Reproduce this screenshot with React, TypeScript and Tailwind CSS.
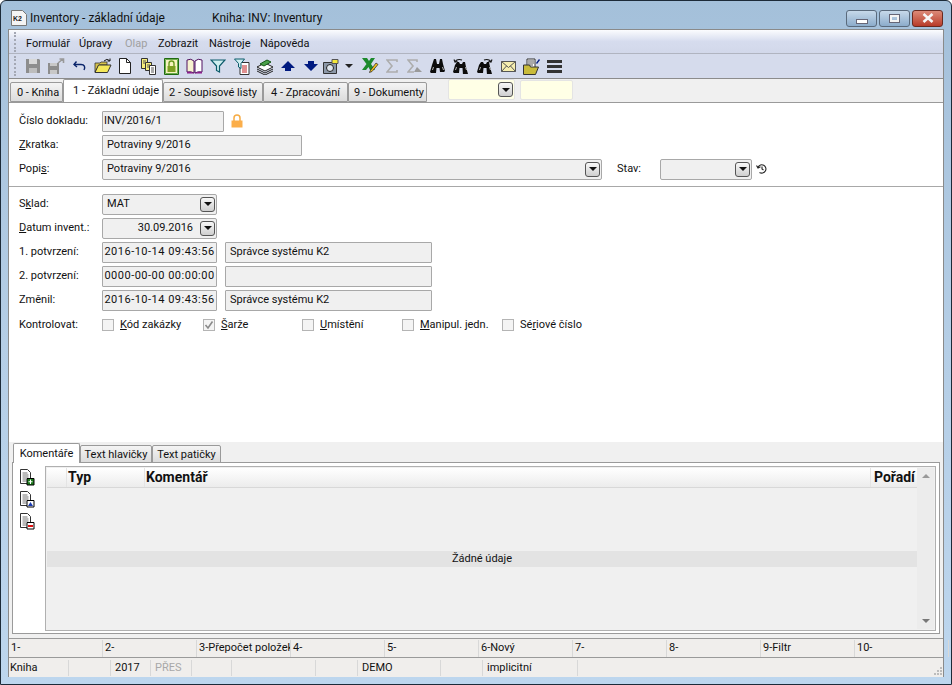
import type { ReactNode } from 'react'

function Field({ w, children, pad = 'px-[4px]' }: { w: string; children?: ReactNode; pad?: string }) {
  return (
    <div className={`${w} h-[21px] shrink-0 rounded-[1px] border border-[#a8a8a8] bg-[#f0f0f0] flex items-center pt-[1px] text-[11px] text-[#111] whitespace-nowrap overflow-hidden ${pad}`}>
      {children}
    </div>
  )
}

function DropBtn() {
  return (
    <span className="w-[15px] h-[15px] rounded-[3px] border border-[#555] bg-gradient-to-b from-[#f8f8f8] to-[#cfcfcf] flex items-center justify-center shrink-0">
      <span className="w-0 h-0 border-x-[4px] border-x-transparent border-t-[4px] border-t-[#111]" />
    </span>
  )
}

function Combo({ w, text, bg = 'bg-[#f0f0f0]', border = 'border-[#a8a8a8]', right }: { w: string; text?: string; bg?: string; border?: string; right?: boolean }) {
  return (
    <div className={`${w} h-[21px] shrink-0 rounded-[2px] border ${border} ${bg} flex items-center text-[11px] text-[#111] pr-[1px]`}>
      <span className={`flex-1 px-[4px] pt-[1px] truncate ${right ? 'text-right pr-[7px]' : ''}`}>{text}</span>
      <DropBtn />
    </div>
  )
}

function Row({ label, children, h = 'h-[24px]' }: { label: ReactNode; children: ReactNode; h?: string }) {
  return (
    <div className={`flex items-center ${h}`}>
      <span className="w-[83px] ml-[1px] pt-[1px] shrink-0 text-[11px] text-[#111]">{label}</span>
      {children}
    </div>
  )
}

function Check({ label, w, checked }: { label: ReactNode; w: string; checked?: boolean }) {
  return (
    <div className={`${w} flex items-center gap-[6px] shrink-0`}>
      <span className="w-[12px] h-[12px] border border-[#b4b4b4] bg-[#f4f4f4] flex items-center justify-center">
        {checked && (
          <svg width="10" height="10" viewBox="0 0 10 10">
            <path d="M1.5 5 L4 8 L8.5 1.5" fill="none" stroke="#8a8a8a" strokeWidth="1.6" />
          </svg>
        )}
      </span>
      <span className="text-[11px] text-[#111]">{label}</span>
    </div>
  )
}

function Tab({ w, children, active, h }: { w: string; children: ReactNode; active?: boolean; h?: string }) {
  return (
    <div
      className={`${w} shrink-0 flex items-center justify-center text-[11px] text-[#111] border border-[#9a9a9a] whitespace-nowrap rounded-t-[2px]
        ${active ? `bg-white border-b-0 pt-[1px] ${h ?? 'h-[23px]'} relative z-10` : `bg-gradient-to-b from-[#f4f4f4] to-[#dcdcdc] pt-[2px] ${h ?? 'h-[20px]'}`}`}
    >
      {children}
    </div>
  )
}

function Doc({ children }: { children?: ReactNode }) {
  return (
    <svg width="16" height="17" viewBox="0 0 16 17">
      <path d="M1.5 .5h7l3 3v11h-10z" fill="#fff" stroke="#333" />
      <path d="M3.500 4h5M3.500 6h6M3.500 8h6M3.500 10h4M3.500 12h4" stroke="#777" />
      {children}
    </svg>
  )
}

function Binoc({ arrow }: { arrow?: 'left' | 'right' }) {
  const top = arrow ? 4 : 1
  return (
    <svg width="16" height="16" viewBox="0 0 16 16">
      <path d={`M4 ${top}h2l1 ${6 - top}h2l1-${6 - top}h2l1 5 2 7-1 1H10L9.500 10h-3L6 15H1l-1-1 2-7z`} fill="#0c0c0c" />
      <path d="M3.500 9l-1 3M12.500 9l1 3" stroke="#b8b8b8" />
      {arrow === 'left' && <path d="M2 3.500Q4.500 .5 9 2M1 1.500l1 2.500 2.500-.5" fill="none" stroke="#111" strokeWidth="1.100" />}
      {arrow === 'right' && <path d="M7 2Q11.500 .5 14 3.500M15 1.500l-1 2.500-2.500-.5" fill="none" stroke="#111" strokeWidth="1.100" />}
    </svg>
  )
}

function Grip() {
  return <span className="w-[2px] h-[20px] shrink-0 border-l-2 border-dotted border-[#a4a8b4]" />
}

const toolbar: { w: string; icon: ReactNode }[] = [
  { w: 'w-[22px]', icon: (
    <svg width="16" height="16" viewBox="0 0 16 16">
      <path d="M1 1h13l1 1v13H1z" fill="#8d8d8d" />
      <path d="M4 1h8v5H4z" fill="#d8d8d8" />
      <path d="M4 10h8v5H4z" fill="#bdbdbd" />
    </svg>
  ) },
  { w: 'w-[24px]', icon: (
    <svg width="18" height="16" viewBox="0 0 18 16">
      <path d="M1 5h11v11H1z" fill="#8d8d8d" />
      <path d="M3 5h7v3H3zM3 12h7v4H3z" fill="#c8c8c8" />
      <path d="M11 5l5-4M12.5 1H16.5V5" fill="none" stroke="#999" strokeWidth="1.6" />
    </svg>
  ) },
  { w: 'w-[23px]', icon: (
    <svg width="13" height="10" viewBox="0 0 13 10">
      <path d="M3.500 .5L1 3.500 4 6" fill="none" stroke="#0a246a" strokeWidth="1.400" />
      <path d="M1.500 3.500H8C11.500 3.500 12.500 6 11 9" fill="none" stroke="#0a246a" strokeWidth="1.400" />
    </svg>
  ) },
  { w: 'w-[23px]', icon: (
    <svg width="18" height="16" viewBox="0 0 18 16">
      <path d="M1 5h5l1-1h6v3H5L1 14z" fill="#d6c24a" stroke="#333" strokeWidth=".8" />
      <path d="M1 14.500L4.500 7H17l-3.500 7.500z" fill="#f4e85a" stroke="#333" />
      <path d="M10 3Q13 0 15.500 2.500M16 0.500V3H13.500" fill="none" stroke="#111" />
    </svg>
  ) },
  { w: 'w-[22px]', icon: (
    <svg width="14" height="16" viewBox="0 0 14 16">
      <path d="M1.500.5h7l4 4v11h-11z" fill="#fff" stroke="#222" />
      <path d="M8.500.5v4h4" fill="none" stroke="#222" />
    </svg>
  ) },
  { w: 'w-[24px]', icon: (
    <svg width="17" height="17" viewBox="0 0 17 17">
      <path d="M1.500.5h6v10h-6z" fill="#f7ee7a" stroke="#333" />
      <path d="M5.500 4.500h6v8h-6z" fill="#f7ee7a" stroke="#333" />
      <path d="M9.500 7.500h6v9h-6z" fill="#fff" stroke="#333" />
      <path d="M3 3h3M3 5h2M7 7h3M7 9h2M11 10h3M11 12h3M11 14h3" stroke="#555" />
    </svg>
  ) },
  { w: 'w-[23px]', icon: (
    <svg width="15" height="17" viewBox="0 0 15 17">
      <path d="M.5.500h14v16H.5z" fill="#f7f3c0" stroke="#1f6a10" />
      <path d="M1.500 1.500h12v14h-12z" fill="none" stroke="#4a9a30" strokeWidth=".8" />
      <path d="M5 8V5.500a2.500 2.500 0 0 1 5 0V8" fill="none" stroke="#6a9a20" strokeWidth="1.4" />
      <path d="M3.500 8h8v6h-8z" fill="#7ea022" />
    </svg>
  ) },
  { w: 'w-[23px]', icon: (
    <svg width="17" height="16" viewBox="0 0 17 16">
      <path d="M1 2Q5 0 8 3V15Q5 13 1 14z" fill="#f7f3d0" stroke="#501060" />
      <path d="M16 2Q12 0 9 3V15Q12 13 16 14z" fill="#fff" stroke="#501060" />
      <path d="M1 14Q5 13 8.500 15.500Q12 13 16 14v1.500H1z" fill="#8a1d8a" />
    </svg>
  ) },
  { w: 'w-[24px]', icon: (
    <svg width="16" height="14" viewBox="0 0 16 14">
      <path d="M1 1h14L9.500 7v6L6.500 11.500V7z" fill="#cfeef0" stroke="#0b5a6a" strokeWidth="1.2" />
    </svg>
  ) },
  { w: 'w-[23px]', icon: (
    <svg width="16" height="17" viewBox="0 0 16 17">
      <path d="M6 4.500h9v12H6z" fill="#fff" stroke="#333" />
      <path d="M8 8h5M8 10h5M8 12h5M8 14h5" stroke="#c02020" />
      <path d="M0.500 1h10L7 5.500v5L4.500 9V5.500z" fill="#cfeef0" stroke="#0b5a6a" />
    </svg>
  ) },
  { w: 'w-[23px]', icon: (
    <svg width="18" height="17" viewBox="0 0 18 17">
      <path d="M1 9l8-4 8 4-8 4z" fill="#fff" stroke="#222" />
      <path d="M1 11l8 4 8-4M1 13l8 4 8-4" fill="none" stroke="#222" />
      <path d="M4 6l7-4 4 2-7 4z" fill="#4aa04a" stroke="#155515" />
    </svg>
  ) },
  { w: 'w-[23px]', icon: (
    <svg width="14" height="10" viewBox="0 0 14 10"><path d="M7 0l7 7h-4v3H4V7H0z" fill="#001a80" /></svg>
  ) },
  { w: 'w-[24px]', icon: (
    <svg width="14" height="10" viewBox="0 0 14 10"><path d="M7 10L0 3h4V0h6v3h4z" fill="#001a80" /></svg>
  ) },
  { w: 'w-[16px]', icon: (
    <svg width="16" height="15" viewBox="0 0 16 15">
      <path d="M.5 3.500h13v11H.5z" fill="#8c98a8" stroke="#333" />
      <circle cx="7" cy="9" r="3.500" fill="#dfe6ee" stroke="#222" />
      <path d="M9 .5h6v4H9z" fill="#f5e93a" stroke="#555" />
    </svg>
  ) },
  { w: 'w-[20px]', icon: <span className="w-0 h-0 border-x-[4px] border-x-transparent border-t-[4px] border-t-[#222]" /> },
  { w: 'w-[21px]', icon: (
    <svg width="18" height="18" viewBox="0 0 18 18">
      <path d="M1 1h5l2 3 2-3h4l-4 6 4 6H9L7.500 10 5 13H1l4.500-6z" fill="#1c8a2c" />
      <path d="M9 14L15 6l2 1.500-6 7-2.500 1z" fill="#f0c020" stroke="#222" strokeWidth=".7" />
    </svg>
  ) },
  { w: 'w-[23px]', icon: (
    <svg width="12" height="14" viewBox="0 0 12 14"><path d="M11 3V1H1l5 6-5 6h10v-2" fill="none" stroke="#adadad" strokeWidth="1.6" /></svg>
  ) },
  { w: 'w-[24px]', icon: (
    <svg width="16" height="14" viewBox="0 0 16 14">
      <path d="M10 3V1H1l5 6-5 6h6" fill="none" stroke="#adadad" strokeWidth="1.6" />
      <path d="M7 13l3-5 2 2 3 3z" fill="#9a9a9a" />
    </svg>
  ) },
  { w: 'w-[22px]', icon: <Binoc /> },
  { w: 'w-[24px]', icon: <Binoc arrow="left" /> },
  { w: 'w-[24px]', icon: <Binoc arrow="right" /> },
  { w: 'w-[23px]', icon: (
    <svg width="15" height="11" viewBox="0 0 15 11">
      <path d="M.5.500h14v10H.5z" fill="#f6eeb0" stroke="#555" />
      <path d="M.5.500l7 6 7-6M.5 10.500l5-5.500M14.500 10.500l-5-5.500" fill="none" stroke="#555" />
    </svg>
  ) },
  { w: 'w-[23px]', icon: (
    <svg width="17" height="17" viewBox="0 0 17 17">
      <path d="M4 1h8v9H4z" fill="#fff" stroke="#333" />
      <path d="M5 3h6M5 5h6M5 7h5" stroke="#555" />
      <path d="M.5 7h6l1 2h8l-3 7.500H.5z" fill="#c9bb3a" stroke="#333" />
      <path d="M13 5l3-4 1 1-3 4z" fill="#001a80" />
    </svg>
  ) },
  { w: 'w-[23px]', icon: (
    <svg width="15" height="13" viewBox="0 0 15 13"><path d="M0 0h15v3H0zM0 5h15v3H0zM0 10h15v3H0z" fill="#333" /></svg>
  ) },
]

const fkeys = ['1-', '2-', '3-Přepočet položek', '4-', '5-', '6-Nový', '7-', '8-', '9-Filtr', '10-']

const statusCells: { w: string; text?: string; muted?: boolean }[] = [
  { w: 'w-[60px]', text: 'Kniha' },
  { w: 'w-[42px]' },
  { w: 'w-[40px]', text: '2017' },
  { w: 'w-[41px]', text: 'PŘES', muted: true },
  { w: 'w-[40px]' },
  { w: 'w-[84px]' },
  { w: 'w-[42px]' },
  { w: 'w-[83px]', text: 'DEMO' },
  { w: 'w-[42px]' },
  { w: 'w-[95px]', text: 'implicitní' },
]

export default function App() {
  return (
    <div className="w-[952px] h-[685px] bg-white overflow-hidden [font-family:Roboto,sans-serif]">
      <div className="w-full h-full rounded-t-[6px] border border-[#1c2a38] bg-gradient-to-b from-[#a4c0da] via-[#b5cee6] to-[#bdd6ee] flex flex-col px-[7px] pb-[7px]">
        {/* titulek okna */}
        <div className="h-[28px] shrink-0 flex items-center pt-[5px]">
          <svg width="16" height="16" viewBox="0 0 16 16" className="ml-[3px] mr-[3px]">
            <path d="M.5.5h11l4 4v11H.5z" fill="#f4f4f4" stroke="#777" />
            <text x="2" y="11" fontSize="7" fontWeight="bold" fill="#222" fontFamily="Liberation Sans">K2</text>
          </svg>
          <span className="w-[182px] text-[12px] text-[#111]">Inventory - základní údaje</span>
          <span className="text-[12px] text-[#111]">Kniha: INV: Inventury</span>
          <div className="ml-auto flex items-start gap-[2px] mr-[1px] mt-[1px]">
            <div className="w-[31px] h-[17px] rounded-[3px] border border-[#5a6a7c] bg-gradient-to-b from-[#c7d9ea] to-[#8caccb] flex items-end justify-center pb-[2px]">
              <span className="w-[10px] h-[3px] bg-white border border-[#667] box-content" />
            </div>
            <div className="w-[31px] h-[17px] rounded-[3px] border border-[#5a6a7c] bg-gradient-to-b from-[#c7d9ea] to-[#8caccb] flex items-center justify-center">
              <span className="w-[9px] h-[7px] border-2 border-[#f4f4f4] outline outline-1 outline-[#667]" />
            </div>
            <div className="w-[31px] h-[17px] rounded-[3px] border border-[#6a2a20] bg-gradient-to-b from-[#dc8a78] to-[#b83a28] flex items-center justify-center">
              <svg width="12" height="10" viewBox="0 0 12 10">
                <path d="M1.500 1l9 8M10.500 1l-9 8" stroke="#f6f6f6" strokeWidth="2.600" />
              </svg>
            </div>
          </div>
        </div>

        <div className="flex-1 min-h-0 flex flex-col border-t border-x border-[#8a8a8a] bg-[#f0f0f0]">
          {/* hlavní nabídka */}
          <div className="h-[24px] shrink-0 flex items-center pl-[5px] bg-gradient-to-b from-[#fbfcfe] via-[#d6dcee] to-[#d2d8ea] text-[11px] text-[#111] border-b border-[#b0b4c0]">
            <Grip />
            <div className="flex items-center pt-[5px]">
              <span className="w-[53px] ml-[10px]">Formulář</span>
              <span className="w-[46px]">Úpravy</span>
              <span className="w-[33px] text-[#a0a0a0]">Olap</span>
              <span className="w-[51px]">Zobrazit</span>
              <span className="w-[51px]">Nástroje</span>
              <span>Nápověda</span>
            </div>
          </div>
          {/* nástrojová lišta */}
          <div className="h-[25px] shrink-0 flex items-center pl-[5px] bg-[#d5dbec] border-b border-[#8c8c8c]">
            <Grip />
            <span className="w-[6px]" />
            {toolbar.map((t, i) => (
              <span key={i} className={`${t.w} h-[20px] flex items-center justify-center shrink-0`}>
                {t.icon}
              </span>
            ))}
          </div>

          {/* záložky */}
          <div className="h-[23px] shrink-0 flex items-end pl-[1px] bg-[#f0f0f0] relative">
            <Tab w="w-[53px]" h="h-[20px]"><span className="ml-[3px]">0 - Kniha</span></Tab>
            <Tab w="w-[100px]" active><span className="ml-[6px]">1 - Základní údaje</span></Tab>
            <Tab w="w-[100px]" h="h-[20px]">2 - Soupisové listy</Tab>
            <Tab w="w-[85px]" h="h-[20px]">4 - Zpracování</Tab>
            <Tab w="w-[79px]" h="h-[20px]"><span className="ml-[3px]">9 - Dokumenty</span></Tab>
            <div className="ml-[21px] mb-[2px]">
              <Combo w="w-[67px]" bg="bg-[#ffffe6]" border="border-[#e4e4e4]" />
            </div>
            <div className="ml-[5px] mb-[2px] w-[53px] h-[20px] bg-[#ffffe6] border border-[#e4e4e4] rounded-[2px]" />
          </div>

          {/* formulář */}
          <div className="h-[340px] shrink-0 bg-white border-t border-[#9a9a9a] pt-[6px] flex flex-col">
            <div className="pl-[9px]">
              <Row label="Číslo dokladu:">
                <Field w="w-[122px]" pad="px-[1px]">INV/2016/1</Field>
                <svg width="12" height="14" viewBox="0 0 12 14" className="ml-[7px]">
                  <path d="M3 7V4a3 3 0 0 1 6 0v3" fill="none" stroke="#f6ac45" strokeWidth="1.500" />
                  <path d="M.5 6.500h11v7H.5z" fill="#fbae4a" />
                </svg>
              </Row>
              <Row label={<><span className="underline">Z</span>kratka:</>}>
                <Field w="w-[200px]">Potraviny 9/2016</Field>
              </Row>
              <Row label={<>Popi<span className="underline">s</span>:</>}>
                <Combo w="w-[500px]" text="Potraviny 9/2016" />
                <span className="w-[43px] ml-[15px] pt-[1px] text-[11px] text-[#111]">Stav:</span>
                <Combo w="w-[92px]" />
                <svg width="12" height="12" viewBox="0 0 12 12" className="ml-[4px]">
                  <path d="M2 4a4.200 4.200 0 1 1 1.500 5.500M.5 2.500L2 5l2.500-1.200M6 3.500V6l1.500 1" fill="none" stroke="#222" strokeWidth="1.100" />
                </svg>
              </Row>
            </div>
            <div className="h-[1px] bg-[#a8a8a8] mt-[5px] mb-[5px]" />
            <div className="pl-[9px]">
              <Row label={<>S<span className="underline">k</span>lad:</>}>
                <Combo w="w-[115px]" text="MAT" />
              </Row>
              <Row label={<><span className="underline">D</span>atum invent.:</>}>
                <Combo w="w-[115px]" text="30.09.2016" right />
              </Row>
              <Row label="1. potvrzení:">
                <Field w="w-[115px]" pad="px-[1px] justify-center tracking-[0.5px]">2016-10-14 09:43:56</Field>
                <div className="w-[8px]" />
                <Field w="w-[207px]">Správce systému K2</Field>
              </Row>
              <Row label="2. potvrzení:">
                <Field w="w-[115px]" pad="px-[1px] justify-center tracking-[0.5px]">0000-00-00 00:00:00</Field>
                <div className="w-[8px]" />
                <Field w="w-[207px]" />
              </Row>
              <Row label="Změnil:">
                <Field w="w-[115px]" pad="px-[1px] justify-center tracking-[0.5px]">2016-10-14 09:43:56</Field>
                <div className="w-[8px]" />
                <Field w="w-[207px]">Správce systému K2</Field>
              </Row>
              <Row label="Kontrolovat:" h="h-[26px]">
                <Check w="w-[101px]" label={<><span className="underline">K</span>ód zakázky</>} />
                <Check w="w-[99px]" checked label={<><span className="underline">Š</span>arže</>} />
                <Check w="w-[100px]" label={<><span className="underline">U</span>místění</>} />
                <Check w="w-[100px]" label={<><span className="underline">M</span>anipul. jedn.</>} />
                <Check w="w-[90px]" label={<>Sé<span className="underline">r</span>iové číslo</>} />
              </Row>
            </div>
          </div>

          {/* spodní záložky */}
          <div className="flex-1 min-h-0 flex flex-col px-[3px] bg-[#f0f0f0]">
            <div className="h-[20px] shrink-0 flex items-end pl-[1px] mt-[1px] -mb-[1px] relative z-10">
              <Tab w="w-[67px]" active h="h-[20px]">Komentáře</Tab>
              <Tab w="w-[72px]" h="h-[18px]">Text hlavičky</Tab>
              <Tab w="w-[69px]" h="h-[18px]">Text patičky</Tab>
            </div>
            <div className="h-[172px] shrink-0 w-[928px] bg-white border border-[#9a9a9a] pt-[3px] pr-[3px] pb-[2px] pl-[6px] flex">
              <div className="w-[26px] shrink-0 flex flex-col gap-[5px] pt-[3px]">
                <Doc><path d="M8 9.500h7v6.500H8z" fill="#1a7a1a" stroke="#000" /><path d="M11.500 10.500v4.500M9.500 12.750h4" stroke="#fff" /></Doc>
                <Doc><path d="M8 9.500h7v6.500H8z" fill="#fff" stroke="#000" /><path d="M9 15l2.500-4 2.500 4z" fill="#1a3ab0" /></Doc>
                <Doc><path d="M8 9.500h7v6.500H8z" fill="#fff" stroke="#000" /><path d="M9 12h5v2H9z" fill="#e01010" /></Doc>
              </div>
              <div className="flex-1 flex border border-[#b0b0b0] bg-[#f0f0f0] p-[1px]">
                <div className="flex-1 flex flex-col">
                  <div className="h-[20px] shrink-0 flex bg-gradient-to-b from-white to-[#ececec] border-b border-[#d8d8d8] text-[14px] font-bold text-[#111]">
                    <span className="w-[20px] border-r border-[#e4e4e4]" />
                    <span className="w-[78px] pl-[1px] border-r border-[#e4e4e4] flex items-center">Typ</span>
                    <span className="flex-1 pl-[1px] border-r border-[#e4e4e4] flex items-center">Komentář</span>
                    <span className="w-[46px] pl-[3px] flex items-center overflow-hidden whitespace-nowrap">Pořadí</span>
                  </div>
                  <div className="flex-1 flex flex-col justify-center">
                    <div className="h-[16px] pt-[2px] bg-[#e3e3e3] text-[11px] text-[#111] flex items-center justify-center">Žádné údaje</div>
                  </div>
                </div>
                <div className="w-[17px] shrink-0 bg-[#ececec] flex flex-col items-center justify-between py-[6px]">
                  <span className="w-0 h-0 border-x-[4px] border-x-transparent border-b-[4px] border-b-[#999]" />
                  <span className="w-0 h-0 border-x-[4px] border-x-transparent border-t-[4px] border-t-[#777]" />
                </div>
              </div>
            </div>
          </div>

          {/* funkční klávesy */}
          <div className="h-[20px] shrink-0 flex items-center bg-[#f0eeec] border-y border-[#9a9a9a] text-[11px] text-[#111]">
            {fkeys.map((k) => (
              <span key={k} className="w-[94px] h-[17px] shrink-0 pl-[2px] pt-[1px] border-r border-[#d8d8d8] flex items-center whitespace-nowrap overflow-hidden">
                {k}
              </span>
            ))}
          </div>
          {/* stavový řádek */}
          <div className="h-[19px] shrink-0 flex items-center bg-[#f0eeec] text-[11px] text-[#111]">
            {statusCells.map((c, i) => (
              <span key={i} className={`${c.w} h-[16px] pt-[2px] shrink-0 border-r border-[#d8d8d8] flex items-center whitespace-nowrap ${i === 0 ? 'pl-[1px]' : 'pl-[4px]'} ${c.muted ? 'text-[#a8a8a8]' : ''}`}>
                {c.text}
              </span>
            ))}
            <span className="flex-1 flex justify-end items-end h-full">
              <svg width="11" height="11" viewBox="0 0 11 11">
                <path d="M8 1h2v2H8zM5 4h2v2H5zM8 4h2v2H8zM2 7h2v2H2zM5 7h2v2H5zM8 7h2v2H8z" fill="#bcbcbc" />
              </svg>
            </span>
          </div>
        </div>
      </div>
    </div>
  )
}
